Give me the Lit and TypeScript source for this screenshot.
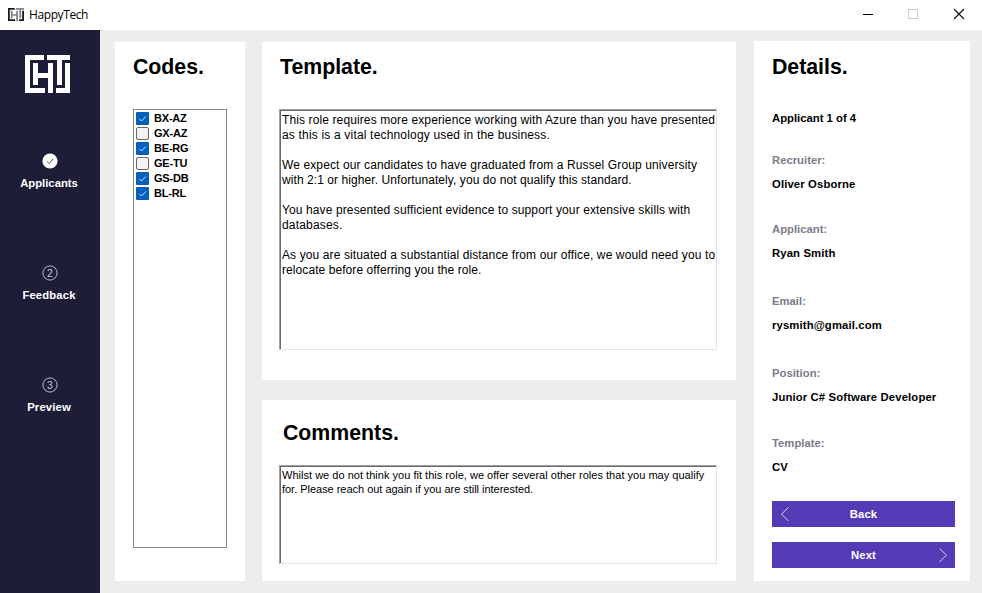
import { LitElement, html, css, svg } from "lit";
import { customElement, property } from "lit/decorators.js";

const CODES: [string, boolean][] = [
  ["BX-AZ", true], ["GX-AZ", false], ["BE-RG", true],
  ["GE-TU", false], ["GS-DB", true], ["BL-RL", true],
];

const TEMPLATE: [string, string][] = [
  ["This role requires more experience working with Azure than you have presented", ""],
  ["as this is a vital technology used in the business.", "loose"],
  ["", ""],
  ["We expect our candidates to have graduated from a Russel Group university", ""],
  ["with 2:1 or higher. Unfortunately, you do not qualify this standard.", "tight"],
  ["", ""],
  ["You have presented sufficient evidence to support your extensive skills with", ""],
  ["databases.", "loose"],
  ["", ""],
  ["As you are situated a substantial distance from our office, we would need you to", ""],
  ["relocate before offerring you the role.", "tight"],
];

const COMMENTS: [string, string][] = [
  ["Whilst we do not think you fit this role, we offer several other roles that you may qualify", ""],
  ["for. Please reach out again if you are still interested.", "tight"],
];

const DETAILS = [
  ["Recruiter:", "Oliver Osborne", "recruiter"],
  ["Applicant:", "Ryan Smith", "applicant"],
  ["Email:", "rysmith@gmail.com", "email"],
  ["Position:", "Junior C# Software Developer", "position"],
  ["Template:", "CV", "template-field"],
];

@customElement("ht-logo")
export class HtLogo extends LitElement {
  static styles = css`
    :host { display: block; }
    svg { display: block; width: 100%; height: 100%; }
  `;
  render() {
    return html`<svg viewBox="0 0 45 38" preserveAspectRatio="none">
      <path fill="var(--logo-outer, #fff)" d="M0 0H19V5H5V33H20V38H0Z" />
      <path fill="var(--logo-inner, #fff)" d="M8 8H13V18H23V8H28V38H23V23H13V30H8Z" />
      <path fill="var(--logo-inner, #fff)" d="M22 0H45V5H37V30H32V5H22Z" />
      <path fill="var(--logo-outer, #fff)" d="M40 8H45V38H31V33H40Z" />
    </svg>`;
  }
}

@customElement("step-item")
export class StepItem extends LitElement {
  @property() label = "";
  @property({ type: Number }) number = 1;
  @property({ type: Boolean }) done = false;
  static styles = css`
    :host { display: flex; flex-direction: column; align-items: center; height: 112px; color: #fff; }
    :host([done]) { letter-spacing: 0; }
    svg { width: 16px; height: 16px; display: block; }
    .label { margin-top: 7px; line-height: 14px; padding-right: 2px; }
    .num { font: 10.5px "Liberation Sans", Arial, sans-serif; letter-spacing: 0; fill: #c4c4cf; }
  `;
  render() {
    return html`<svg viewBox="0 0 16 16">
        ${this.done
          ? svg`<circle cx="8" cy="8" r="7.6" fill="#fff"/><path d="M5 8.4L7.2 10.6L11.2 5.6" fill="none" stroke="#55556b" stroke-width="1"/>`
          : svg`<circle cx="8" cy="8" r="7.1" fill="none" stroke="#b9b9c6" stroke-width="1"/><text class="num" x="8" y="11.8" text-anchor="middle">${this.number}</text>`}
      </svg>
      <span class="label">${this.label}</span>`;
  }
}

@customElement("app-root")
export class AppRoot extends LitElement {
  static styles = css`
    :host {
      display: flex; flex-direction: column; width: 982px; height: 593px; overflow: hidden;
      background: #ededed; color: #000;
      font: bold 11.3px "Liberation Sans", Arial, sans-serif; letter-spacing: 0.13px;
    }
    * { box-sizing: border-box; }
    .titlebar { display: flex; height: 30px; flex: none; background: #fff; padding: 0 15px 0 8px; align-items: center; }
    .mini { width: 16px; height: 13px; margin-top: -2px; --logo-outer: #1c1c1c; --logo-inner: #85828f; }
    .app { font: 12px "Open Sans", sans-serif; letter-spacing: -0.4px; margin: -1px 0 0 5px; flex: 1; }
    .win { width: 16px; height: 16px; margin-left: 30px; display: block; margin-top: -2px; }
    .win:nth-of-type(2) { margin-left: 29px; }
    .body { display: flex; flex: 1; min-height: 0; }
    .sidebar { width: 100px; background: #1e1d38; flex: none; }
    .logo { width: 45px; height: 38px; margin: 25px 0 60px 25px; }
    .content { display: grid; grid-template-columns: 130px 474px 216px; column-gap: 17px; padding: 12px 12px 12px 15px; }
    .card { background: #fff; min-width: 0; }
    .codes { padding: 12px 18px 0; }
    .middle { display: flex; flex-direction: column; gap: 20px; }
    .template { height: 338px; padding: 12px 19px 0 17px; }
    .comments { height: 181px; padding: 20px 19px 0 17px; }
    .details { margin-top: -1px; margin-left: 1px; padding: 13px 15px 0 18px; width: 216px; }
    h1 { margin: 0; font-size: 21.33px; line-height: 26px; letter-spacing: -0.03px; }
    .template h1 { padding-left: 1px; }
    .comments h1 { padding-left: 4px; }
    .list { height: 439px; width: 94px; margin-top: 29px; border: 1px solid #828790; padding: 1px 2px; }
    .row { display: flex; align-items: center; height: 15px; gap: 5px; font-size: 11px; letter-spacing: -0.2px; }
    .row span { line-height: 13px; padding-bottom: 1px; }
    .row svg { width: 13px; height: 13px; display: block; }
    .box { width: 438px; border: 1px solid; border-color: #a0a0a0 #e3e3e3 #e3e3e3 #a0a0a0; box-shadow: inset 1px 1px #696969; white-space: pre; font-weight: normal; padding-left: 2px; }
    .template .box { margin-top: 29px; height: 241px; padding-top: 3px; font-size: 12px; line-height: 15px; letter-spacing: 0.115px; }
    .comments .box { margin-top: 19px; height: 99px; padding-top: 2px; font-size: 11px; line-height: 14px; letter-spacing: 0.02px; }
    .line { height: 15px; }
    .line.loose { letter-spacing: 0.18px; }
    .line.tight { letter-spacing: 0.075px; }
    .comments .line { height: 14px; }
    .comments .tight { letter-spacing: -0.025px; }
    .count { margin-top: 31px; line-height: 14px; height: 14px; letter-spacing: 0; }
    .field { line-height: 14px; height: 38px; }
    .name { color: #7c7b8a; margin-bottom: 10px; letter-spacing: 0; }
    .recruiter { margin-top: 28px; }
    .applicant { margin-top: 31px; }
    .email, .position { margin-top: 34px; }
    .template-field { margin-top: 32px; }
    .btn { width: 183px; height: 26px; display: grid; grid-template-columns: 26px 1fr 26px; align-items: center; text-align: center; background: #543ab5; color: #fff; margin-top: 15px; }
    .back { margin-top: 27px; }
    .btn svg { width: 26px; height: 26px; display: block; }
  `;

  private check(on: boolean) {
    return html`<svg viewBox="0 0 13 13">${on
      ? svg`<rect width="13" height="13" rx="1" fill="#0560bb"/><path d="M3.3 6.8L5.5 9L9.8 4.5" fill="none" stroke="#cfe2f5" stroke-width="1"/>`
      : svg`<rect x=".5" y=".5" width="12" height="12" rx="1.5" fill="#f3f3f3" stroke="#666"/>`}</svg>`;
  }

  render() {
    return html`
      <div class="titlebar">
        <ht-logo class="mini"></ht-logo>
        <span class="app">HappyTech</span>
        <svg class="win" viewBox="0 0 16 16"><path d="M3 8.5H13" stroke="#000"/></svg>
        <svg class="win" viewBox="0 0 16 16"><rect x="3.5" y="3.5" width="9" height="9" fill="none" stroke="#ccc"/></svg>
        <svg class="win" viewBox="0 0 16 16"><path d="M3 3L13 13M13 3L3 13" stroke="#111" stroke-width="1.2"/></svg>
      </div>
      <div class="body">
        <nav class="sidebar">
          <ht-logo class="logo"></ht-logo>
          <step-item label="Applicants" done></step-item>
          <step-item label="Feedback" number="2"></step-item>
          <step-item label="Preview" number="3"></step-item>
        </nav>
        <main class="content">
          <section class="card codes">
            <h1>Codes.</h1>
            <div class="list">${CODES.map(([code, on]) => html`<div class="row">${this.check(on)}<span>${code}</span></div>`)}</div>
          </section>
          <div class="middle">
            <section class="card template">
              <h1>Template.</h1>
              <div class="box">${TEMPLATE.map(([t, k]) => html`<div class="line ${k}">${t}</div>`)}</div>
            </section>
            <section class="card comments">
              <h1>Comments.</h1>
              <div class="box">${COMMENTS.map(([t, k]) => html`<div class="line ${k}">${t}</div>`)}</div>
            </section>
          </div>
          <section class="card details">
            <h1>Details.</h1>
            <div class="count">Applicant 1 of 4</div>
            ${DETAILS.map(([n, v, k]) => html`<div class="field ${k}"><div class="name">${n}</div><div>${v}</div></div>`)}
            <div class="btn back"><svg viewBox="0 0 26 26"><path d="M16.5 6.5L9.5 13L16.5 20" fill="none" stroke="#d8d2ee"/></svg><span>Back</span></div>
            <div class="btn"><i></i><span>Next</span><svg viewBox="0 0 26 26"><path d="M10.5 6.5L17.5 13L10.5 20" fill="none" stroke="#d8d2ee"/></svg></div>
          </section>
        </main>
      </div>`;
  }
}
